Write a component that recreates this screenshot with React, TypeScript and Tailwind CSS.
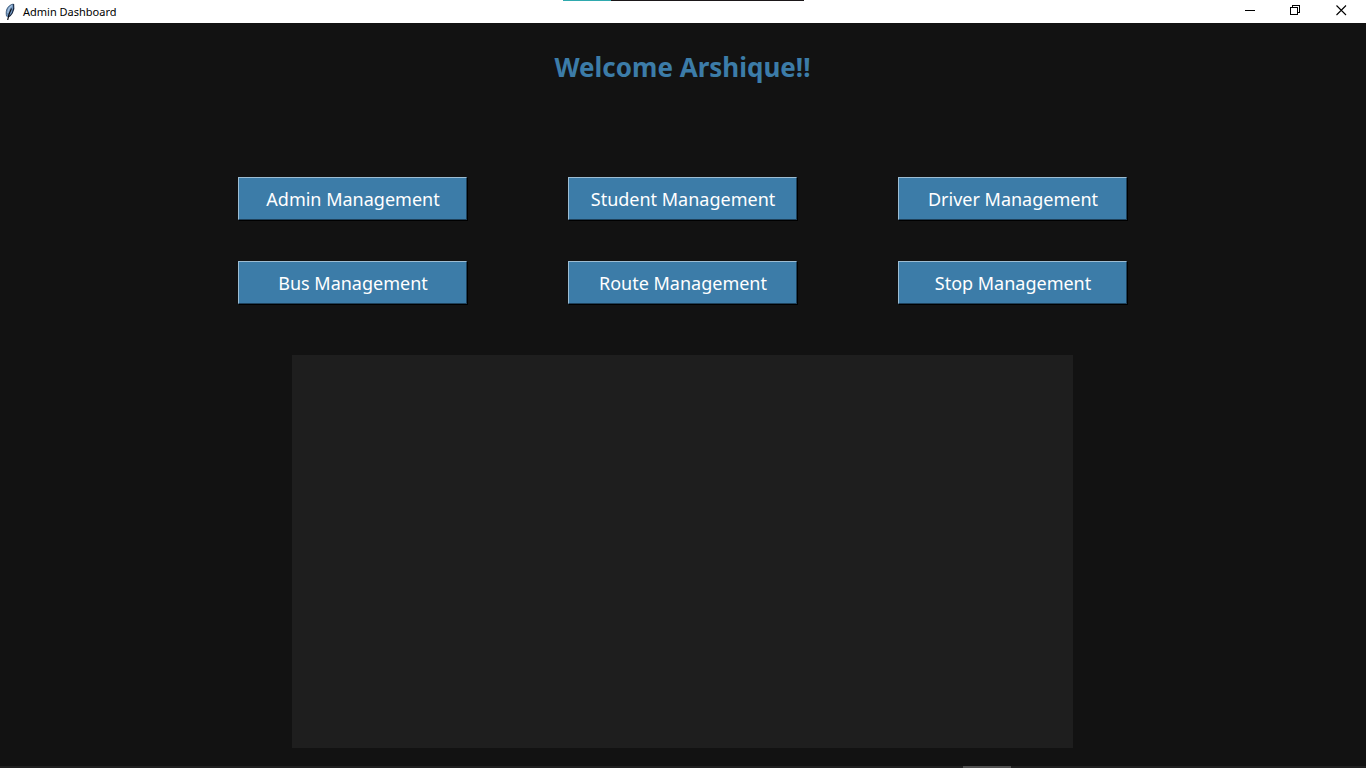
import React from "react";

const sections: string[] = [
  "Admin Management",
  "Student Management",
  "Driver Management",
  "Bus Management",
  "Route Management",
  "Stop Management",
];

function FeatherIcon() {
  return (
    <svg width="16" height="18" viewBox="0 0 16 18" aria-hidden="true">
      <path d="M10.500 1C7.500 1 4.500 3.500 3.500 6.500C2.700 9 3 11.500 3.600 14L5 14C7.500 12.500 9.500 10 10.300 7.500C11 5 11.200 3 10.500 1Z" fill="#6f94bd" />
      <path d="M9 2.500C6.800 4 5.200 6.500 4.800 10" stroke="#a9c4e0" strokeWidth="1.200" fill="none" />
      <path d="M10.600 1C11.300 4 10.600 7.500 9.300 10C8.300 11.800 6.800 13.200 5.300 14" stroke="#14233c" strokeWidth="1.100" fill="none" />
      <path d="M10.300 1C7.300 1.500 4.500 4 3.600 7C3 9 3.100 11 3.500 13" stroke="#3d5875" strokeWidth="0.800" fill="none" />
      <path d="M8.500 5.500C6.800 8.500 5.500 11.500 4.700 17" stroke="#0b0f18" strokeWidth="1.200" fill="none" />
    </svg>
  );
}

function TitleBar() {
  return (
    <header className="relative flex h-[23px] shrink-0 items-center justify-between bg-white text-black">
      <div className="flex items-center gap-1 pl-[3px]">
        <FeatherIcon />
        <span className="font-['Noto_Sans','Open_Sans',sans-serif] text-[11px] leading-4">Admin Dashboard</span>
      </div>
      <div className="absolute left-1/2 top-0 flex h-px w-[241px] -translate-x-[120px] bg-[#1b1719]">
        <div className="h-px w-12 bg-[#2fa9ae]" />
      </div>
      <div className="flex h-full items-start pr-0.5">
        <button type="button" aria-label="Minimize" className="flex h-5 w-[45px] items-center justify-center">
          <svg width="11" height="11" viewBox="0 0 11 11" shapeRendering="crispEdges">
            <path d="M0 5.500H10" stroke="#000" />
          </svg>
        </button>
        <button type="button" aria-label="Restore" className="flex h-5 w-[45px] items-center justify-center">
          <svg width="11" height="11" viewBox="0 0 11 11" fill="none" stroke="#000" shapeRendering="crispEdges">
            <path d="M0.500 2.500H7.500V9.500H0.500Z M2.500 2.500V0.500H9.500V7.500H7.500" />
          </svg>
        </button>
        <button type="button" aria-label="Close" className="flex h-5 w-[46px] items-center justify-center">
          <svg width="11" height="11" viewBox="0 0 11 11" fill="none" stroke="#000" strokeWidth="1.100">
            <path d="M0.500 0.500L10 10M10 0.500L0.500 10" />
          </svg>
        </button>
      </div>
    </header>
  );
}

export default function App() {
  return (
    <div className="flex min-h-screen flex-col bg-[#121212] font-['Noto_Sans','Open_Sans',sans-serif]">
      <TitleBar />
      <main className="flex grow flex-col items-center pb-[18px] pr-px pt-6">
        <h1 className="text-[26px] font-bold leading-10 text-[#3c7ca8]">Welcome Arshique!!</h1>
        <nav className="mt-[90px] grid w-full max-w-[889px] grid-cols-3 gap-x-[101px] gap-y-[41px]">
          {sections.map((name) => (
            <button
              key={name}
              type="button"
              className="h-[43px] whitespace-nowrap border border-b-[#1f415a] border-l-[#9dbdd3] border-r-[#1f415a] border-t-[#9dbdd3] bg-[#3c7ca8] pl-px text-[18px] leading-6 text-white shadow-[1px_1px_0_#000]"
            >
              {name}
            </button>
          ))}
        </nav>
        <section aria-label="Content" className="mt-[51px] min-h-[300px] w-full max-w-[781px] grow bg-[#1e1e1e]" />
      </main>
      <footer className="flex h-0.5 shrink-0 bg-[#202020]">
        <div className="w-[70.5%]" />
        <div className="w-12 bg-[#505050]" />
      </footer>
    </div>
  );
}
